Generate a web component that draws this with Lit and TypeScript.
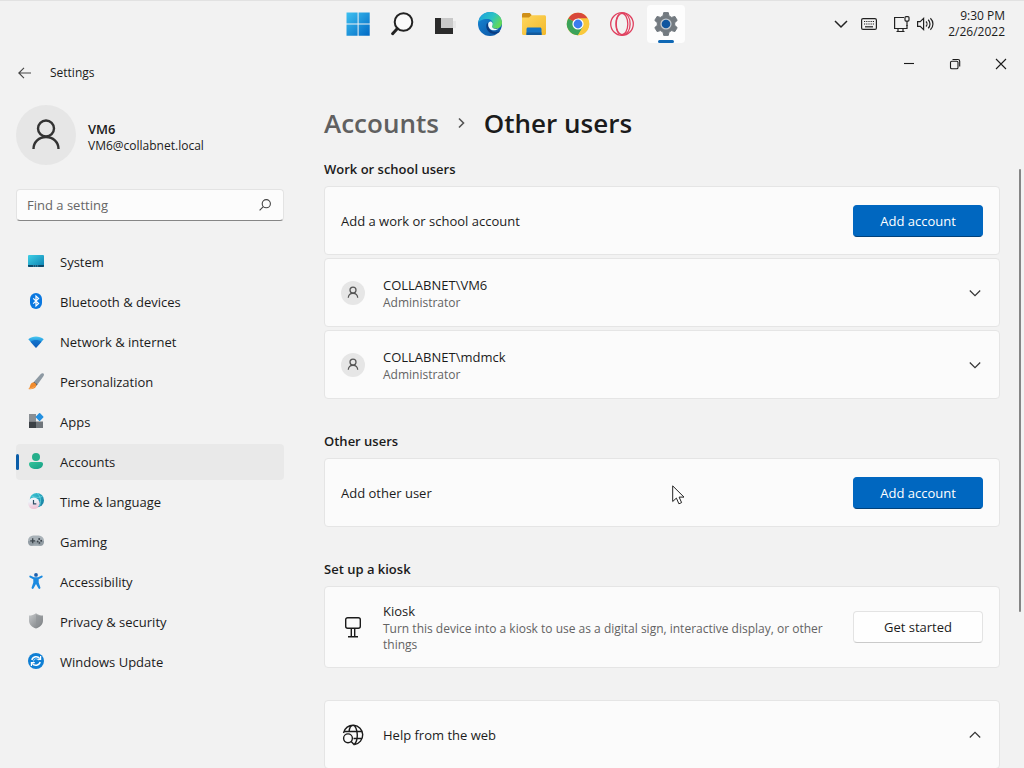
import { LitElement, html, css, svg } from "lit";
import { customElement, state } from "lit/decorators.js";
import { classMap } from "lit/directives/class-map.js";

const navIcons: Record<string, unknown> = {
  System: svg`<defs><linearGradient id="sy" x1="0" y1="0" x2="1" y2="1"><stop offset="0" stop-color="#3fd0e6"/><stop offset="1" stop-color="#0a7fb0"/></linearGradient></defs>
    <rect x="0" y="1" width="16" height="12" rx="1" fill="url(#sy)"/><path d="M0 11h16v1a1 1 0 0 1-1 1H1a1 1 0 0 1-1-1z" fill="#0b4a6b"/><path d="M5 12h6" stroke="#6fc3dd" stroke-width=".8" stroke-dasharray="1.2 .8"/>`,
  "Bluetooth & devices": svg`<rect x="2" y="-1" width="12" height="16" rx="6" fill="#0a78e0"/><path d="M5.200 4.400l5.400 5.200L8 12V2l2.600 2.400-5.400 5.200" fill="none" stroke="#fff" stroke-width="1.200"/>`,
  "Network & internet": svg`<defs><linearGradient id="ne" x1="0" y1="0" x2="0" y2="1"><stop offset="0" stop-color="#4cc9ef"/><stop offset=".5" stop-color="#1a8fe0"/><stop offset="1" stop-color="#0f4fa8"/></linearGradient></defs>
    <path d="M.3 5.200C4.600 1.600 11.400 1.600 15.700 5.200L8.600 13.300a.8.8 0 0 1-1.200 0z" fill="url(#ne)"/><path d="M2.600 7.900c3-2.600 7.800-2.600 10.800 0L8.600 13.300a.8.8 0 0 1-1.200 0z" fill="#0d63c0" opacity=".7"/>`,
  Personalization: svg`<path d="M15.400-.5c.9.700.7 1.800 0 2.700L9.700 10.200 6.200 7.400 12.800 0C13.700-.9 14.700-1 15.400-.5z" fill="#8d99a3"/><path d="M6.200 7.400l3.500 2.800-1.200 1.500-3.400-2.800z" fill="#55606a"/><path d="M5.100 8.600c2-.1 3.900 1.700 3 3.600C6.900 15 3.400 15.600.3 15c1.500-.8 1.300-1.700 1.800-3.200.5-1.600 1.400-3.100 3-3.200z" fill="#f08a2c"/><path d="M1.500 14.500c2 .2 3.800-.6 4.800-2.100" stroke="#fbb366" fill="none"/>`,
  Apps: svg`<path d="M1 0h7v7.500H1z" fill="#8a8f94"/><path d="M1 7.500h7V14H1z" fill="#3c4146"/><path d="M8 7.500h7V14H8z" fill="#70767b"/><rect x="8.600" y="0" width="6" height="6" rx=".8" transform="rotate(45 11.600 3)" fill="#2490e0"/>`,
  Accounts: svg`<defs><linearGradient id="ac" x1="0" y1="0" x2="1" y2="1"><stop offset="0" stop-color="#35c59a"/><stop offset="1" stop-color="#159c85"/></linearGradient></defs><circle cx="8" cy="3" r="4" fill="#25af8b"/><path d="M3 8h10c1.200 0 2 .8 2 1.900C15 13 12 15 8 15s-7-2-7-5.100C1 8.800 1.800 8 3 8z" fill="url(#ac)"/>`,
  "Time & language": svg`<defs><linearGradient id="tl" x1="0" y1="0" x2="1" y2="1"><stop offset="0" stop-color="#3fcbd8"/><stop offset="1" stop-color="#12779c"/></linearGradient><linearGradient id="tc" x1=".3" y1="0" x2=".5" y2="1"><stop offset=".3" stop-color="#eef3f8"/><stop offset="1" stop-color="#efbfd3"/></linearGradient></defs><circle cx="8.800" cy="6.200" r="7.200" fill="url(#tl)"/><path d="M9-.8c3.600 2.600 4.400 8 2.500 13M3.500 2c3.500 1.800 8 1.800 11 .3" fill="none" stroke="#6fdde4" stroke-width=".7"/><circle cx="5.800" cy="9.300" r="5.800" fill="url(#tc)"/><path d="M5.500 6V9.800h2.800" fill="none" stroke="#2d4f66" stroke-width="1.200"/>`,
  Gaming: svg`<rect x="0" y="1.500" width="16" height="10.500" rx="5.250" fill="#a9b2b8"/><path d="M0 7c0 6 4 5.500 6 3.500h4c2 2 6 2.500 6-3.500" fill="#939da4"/><path d="M4.700 4.300v5M2.200 6.800h5" stroke="#3c454c" stroke-width="1.300"/><circle cx="11.200" cy="5" r="1" fill="#3c454c"/><circle cx="13.200" cy="6.800" r="1" fill="#3c454c"/><circle cx="9.700" cy="7.500" r=".9" fill="#3c454c"/><circle cx="11.400" cy="8.900" r=".9" fill="#3c454c"/>`,
  Accessibility: svg`<circle cx="8" cy=".9" r="1.900" fill="#1a5fae"/><path d="M2.200 1.400c-1.100.1-1.200 1.500-.3 2l3.400 1.900v3.200l-1.700 5c-.3 1.500 1.500 2 2 .8L8 10l2.400 4.300c.5 1.200 2.300.7 2-.8l-1.700-5V5.300l3.400-1.900c.9-.5.800-1.900-.3-2L10 3.300H6z" fill="#1b8ae0"/>`,
  "Privacy & security": svg`<defs><linearGradient id="ps" x1="0" y1="0" x2="1" y2="1"><stop offset="0" stop-color="#c6c9cb"/><stop offset="1" stop-color="#75797c"/></linearGradient></defs><path d="M8-.8C10 .9 12.500 1.400 15 1.500v5c0 4-3 6.600-7 8-4-1.400-7-4-7-8v-5c2.500-.1 5-.6 7-2.300z" fill="url(#ps)"/><path d="M8 .6C9.800 1.800 11.800 2.400 13.700 2.500v4c0 3.200-2.300 5.300-5.700 6.600z" fill="#8f9396" opacity=".6"/>`,
  "Windows Update": svg`<circle cx="8" cy="7" r="8" fill="#0f7fd4"/><path d="M3.800 6A4.500 4.500 0 0 1 11.800 4.600M12.200 8A4.500 4.500 0 0 1 4.200 9.400" fill="none" stroke="#fff" stroke-width="1.400"/><path d="M12.600 2v3.400H9.200M3.400 12V8.600h3.400" fill="none" stroke="#fff" stroke-width="1.200"/><path d="M5.500 7.600a2.600 2.600 0 0 1 5-1.200" fill="none" stroke="#8fd0ff"/>`,
};

const person = svg`<circle cx="16" cy="9.500" r="8"/><path d="M3.500 30c0-7 5.500-12 12.500-12s12.500 5 12.500 12"/>`;

const taskbarApps = [
  { name: "Start", icon: svg`<defs><linearGradient id="st" gradientUnits="userSpaceOnUse" x1="0" y1="0" x2="24" y2="24"><stop offset="0" stop-color="#3fc3f2"/><stop offset="1" stop-color="#0068c4"/></linearGradient></defs><path d="M.5.500h11.100v11.100H.5zM12.600.500h11.100v11.100H12.600zM.5 12.600h11.100v11.100H.5zM12.600 12.600h11.100v11.100H12.600z" fill="url(#st)"/>` },
  { name: "Search", icon: svg`<circle cx="13.500" cy="10" r="8.800" fill="#fafafa" stroke="#222" stroke-width="2"/><path d="M7.200 16.700l-4.600 5" stroke="#222" stroke-width="3" stroke-linecap="round"/>` },
  { name: "Task View", icon: svg`<rect x="7" y="6" width="12" height="11" fill="#c9c9c9"/><path d="M1 6h6v10h12v6H1z" fill="#2b2b2b"/><path d="M19 9h3v7h-3z" fill="#e6e6e6"/>` },
  { name: "Edge", icon: svg`<defs><linearGradient id="e1" x1="0" y1="0" x2="1" y2=".5"><stop offset="0" stop-color="#1b9de2"/><stop offset=".6" stop-color="#2bc3c4"/><stop offset="1" stop-color="#62d85b"/></linearGradient><linearGradient id="e2" x1="0" y1="0" x2="1" y2="1"><stop offset="0" stop-color="#1689d8"/><stop offset="1" stop-color="#0b4f9e"/></linearGradient></defs><circle cx="12" cy="12" r="12" fill="url(#e2)"/><path d="M.2 11C1.400 3.800 6.300 0 12 0c7 0 12 5 12 10.600 0 4-2.800 6-5.800 6-2.700 0-4.400-1-4.400-2.100 0-.8 1-1.200 1-3C14.800 9 12.500 7 9 7 4.500 7 1 9 .2 11z" fill="url(#e1)"/><path d="M9.600 10.500c-3.500 4 .2 12 7.400 11.400 2-.2 4-1.200 5.200-2.900-6 2.500-11.500.5-12.600-8.500z" fill="#083c82"/><path d="M10.200 12c.2-2 2-3 3.500-2 1.700 1.200.900 3 .3 4.200-.5 1.200 2.200 3.500 6.700 2.400-4 3.600-11 1.400-10.500-4.600z" fill="#f3f8fb"/>` },
  { name: "File Explorer", icon: svg`<defs><linearGradient id="fe" x1="0" y1="0" x2="1" y2="1"><stop offset="0" stop-color="#ffd75e"/><stop offset="1" stop-color="#f2b92c"/></linearGradient></defs><path d="M0 2.500C0 1.600.6 1 1.500 1h6.300l2 2.200L7.500 7H0z" fill="#cf8f18"/><path d="M0 5.500h7l2.500-2.300h13c.9 0 1.500.6 1.500 1.500v16.800c0 .8-.6 1.500-1.500 1.500h-21C.6 23 0 22.300 0 21.500z" fill="url(#fe)"/><path d="M4.500 17c0-.9.6-1.500 1.500-1.500h12c.9 0 1.500.6 1.500 1.500V23h-15z" fill="#1473c4"/><path d="M4.500 20.500h15V23h-15z" fill="#125a9c"/>` },
  { name: "Chrome", icon: svg`<circle cx="12" cy="12" r="11.200" fill="#f9c93c"/><path d="M12 12L2.300 6.400a11.200 11.200 0 0 1 19.400 0H12z" fill="#d8483b"/><path d="M2.300 6.400A11.200 11.200 0 0 0 12 23.200l5-8.400-5-2.800z" fill="#3ba35a"/><path d="M12 6.400h9.700a11.200 11.200 0 0 1-9.700 16.800l5-8.400z" fill="#f9c93c"/><circle cx="12" cy="12" r="5.600" fill="#fff"/><circle cx="12" cy="12" r="4.400" fill="#3b7ded"/>` },
  { name: "Opera", icon: svg`<g fill="none" stroke="#e0405f" stroke-width="1.300"><circle cx="12" cy="12" r="11.300"/><ellipse cx="12" cy="12" rx="5.800" ry="10.600"/><path d="M12.500 1.200c5 .3 7.600 5 7.600 10.800s-2.600 10.500-7.600 10.800M9 2.500C5 6 5 18 9 21.500"/></g>` },
  { name: "Settings", icon: svg`<path d="M9.700.6h4.600l.7 3.300 2.600 1.500 3.300-1 2.300 4-2.500 2.300v2.600l2.500 2.300-2.300 4-3.300-1-2.600 1.500-.7 3.300H9.700L9 20.100l-2.600-1.500-3.300 1-2.300-4 2.500-2.300v-2.600L.8 8.400l2.300-4 3.300 1L9 3.900z" fill="#737a80" stroke="#737a80" stroke-linejoin="round"/><circle cx="12" cy="12" r="5.600" fill="#c3c9ce"/><circle cx="12" cy="12" r="4.300" fill="#0e559f"/>` },
];

const chevron = (up = false) => html`<svg class="chev" viewBox="0 0 12 12" aria-hidden="true"><path d=${up ? "M.8 8.500L6 3.300l5.200 5.200" : "M.8 3.500L6 8.700l5.200-5.200"} /></svg>`;

@customElement("app-root")
export class AppRoot extends LitElement {
  @state() private active = "Accounts";

  static styles = css`
    * { box-sizing: border-box; }
    :host {
      display: flex; flex-direction: column; height: 100vh; overflow: hidden;
      background: #f2f2f2; color: #1b1b1b;
      font: 13px/20px "Open Sans", "Noto Sans", sans-serif;
    }
    button, input { font: inherit; color: inherit; }
    button { border: 0; background: none; padding: 0; }
    h1, h2, p { margin: 0; font: inherit; }
    svg { display: block; overflow: visible; }
    .taskbar {
      flex: none; height: 48px; border-top: 1px solid #e2e2e2; padding-bottom: 1px;
      display: grid; grid-template-columns: 1fr auto 1fr; align-items: center;
    }
    .apps { grid-column: 2; display: flex; gap: 6px; }
    .app { width: 38px; height: 38px; display: grid; place-items: center; position: relative; border-radius: 4px; }
    .app svg { width: 24px; height: 24px; }
    .app.open { background: #fdfdfd; }
    .app.open::after { content: ""; position: absolute; bottom: 0; left: 11px; width: 16px; height: 3px; border-radius: 2px; background: #0f68b5; }
    .tray { justify-self: end; display: flex; align-items: center; padding-right: 19px; }
    .tray svg { fill: none; stroke: #222; stroke-width: 1.2; }
    .tray .more { width: 12px; height: 12px; margin-right: 14px; stroke-width: 1.5; }
    .tray .kbd { width: 16px; height: 12px; margin-right: 16px; }
    .tray .net { width: 17px; height: 16px; margin-right: 7px; }
    .tray .vol { width: 17px; height: 14px; margin-right: 14px; }
    .clock { text-align: right; font-size: 12px; line-height: 16px; }
    .titlebar { flex: none; display: flex; align-items: flex-start; justify-content: space-between; height: 50px; }
    .app-name { display: flex; align-items: center; gap: 18px; padding: 17px 0 0 16px; font-size: 12px; line-height: 16px; }
    .back { width: 16px; height: 16px; display: grid; place-items: center; }
    .back svg { width: 13px; height: 12px; fill: none; stroke: #444; stroke-width: 1.1; }
    .controls { display: flex; }
    .controls button { width: 46px; height: 32px; display: grid; place-items: center; }
    .controls svg { width: 10px; height: 10px; fill: none; stroke: #1b1b1b; stroke-width: 1.1; }
    .body { flex: 1; min-height: 0; display: grid; grid-template-columns: 268px minmax(0, 1fr) 5px; column-gap: 19px; padding-left: 16px; }
    .profile { display: flex; align-items: center; gap: 12px; padding-top: 7px; }
    .avatar { flex: none; border-radius: 50%; background: #e6e6e6; display: grid; place-items: center; }
    .avatar svg { fill: none; stroke: #333; }
    .avatar.large { width: 60px; height: 60px; }
    .avatar.large svg { width: 32px; height: 32px; stroke-width: 2.4; }
    .avatar.small { width: 24px; height: 24px; }
    .avatar.small svg { width: 12px; height: 13px; stroke-width: 3.4; stroke: #555; }
    .who { padding-top: 3px; }
    .name { font-weight: 600; line-height: 18px; }
    .mail { font-size: 12px; line-height: 16px; }
    .search {
      margin-top: 24px; height: 32px; display: flex; align-items: center; padding: 0 12px 0 10px;
      background: #fcfcfc; border: 1px solid #e3e3e3; border-bottom-color: #868686; border-radius: 4px;
    }
    .search input { flex: 1; min-width: 0; border: 0; outline: 0; padding: 0; background: none; }
    .search input::placeholder { color: #666; opacity: 1; }
    .search svg { width: 12px; height: 12px; fill: none; stroke: #444; stroke-width: 1.1; }
    nav { margin-top: 23px; display: flex; flex-direction: column; gap: 4px; }
    .item { height: 36px; display: flex; align-items: center; gap: 16px; padding-left: 12px; border-radius: 4px; color: inherit; text-decoration: none; position: relative; }
    .item svg { width: 16px; height: 16px; }
    .item.active { background: #e9e9e9; }
    .item.active::before { content: ""; position: absolute; left: 0; top: 10px; width: 3px; height: 16px; border-radius: 2px; background: #0a5da8; }
    main { padding: 5px 0 0 21px; }
    .crumbs { display: flex; align-items: center; gap: 18px; font-size: 26px; line-height: 40px; font-weight: 600; }
    .crumbs a { color: #606060; text-decoration: none; }
    .crumbs svg { width: 9px; height: 10px; fill: none; stroke: #555; stroke-width: 1.6; }
    .section { margin-bottom: 32px; }
    .section h2 { font-weight: 600; padding: 16px 0 7px; }
    .section + .section h2 { padding-top: 0; }
    .cards { display: flex; flex-direction: column; gap: 3px; }
    .card {
      min-height: 69px; display: flex; align-items: center; padding: 14px 16px; width: 100%; text-align: left;
      background: #fbfbfb; border: 1px solid #e5e5e5; border-radius: 4px;
    }
    .lead { width: 24px; margin-right: 18px; display: grid; place-items: center; flex: none; }
    .lead svg { width: 22px; height: 22px; fill: none; stroke: #1b1b1b; stroke-width: 1.4; }
    .text { flex: 1; min-width: 0; display: block; }
    .text span { display: block; }
    .text .sub { font-size: 12px; line-height: 16px; color: #636363; }
    .btn { flex: none; width: 130px; height: 32px; margin-left: 20px; border-radius: 4px; }
    .primary { background: #0067c0; color: #fff; border: 1px solid #0067c0; border-bottom-color: #00417a; }
    .standard { background: #fefefe; border: 1px solid #e3e3e3; border-bottom-color: #cacaca; }
    .chev { width: 12px; height: 12px; margin-right: 2px; fill: none; stroke: #333; stroke-width: 1.2; }
    .rail { padding: 71px 0 157px; }
    .thumb { display: block; width: 2px; height: 100%; border-radius: 1px; background: #858585; }
    .pointer { position: absolute; left: 672px; top: 485px; width: 13px; height: 20px; pointer-events: none; }
  `;

  private userCard(name: string) {
    return html`<button class="card">
      <span class="lead"><span class="avatar small"><svg viewBox="0 0 32 32" aria-hidden="true">${person}</svg></span></span>
      <span class="text"><span>${name}</span><span class="sub">Administrator</span></span>
      ${chevron()}
    </button>`;
  }

  render() {
    return html`
      <header class="taskbar">
        <div class="apps">
          ${taskbarApps.map((a) => html`<button class=${classMap({ app: true, open: a.name === "Settings" })} aria-label=${a.name}>
            <svg viewBox="0 0 24 24" aria-hidden="true">${a.icon}</svg>
          </button>`)}
        </div>
        <div class="tray">
          <svg class="more" viewBox="0 0 12 12"><path d="M0 3l6 6 6-6"/></svg>
          <svg class="kbd" viewBox="0 0 16 12"><rect x=".6" y=".6" width="14.800" height="10.800" rx="1.500"/><path d="M3 3.500h10M3 6h10" stroke-dasharray="1.200 1"/><path d="M4 8.800h8"/></svg>
          <svg class="net" viewBox="0 0 17 16"><path d="M11 1.500H1.600v11H14V9M5 12.500v3M10 12.500v3M3.500 15.500h8"/><rect x="12" y=".6" width="4" height="4.500" rx="1"/><path d="M14 5v5"/></svg>
          <svg class="vol" viewBox="0 0 17 14"><path d="M.6 4.600h2.600L6.600 1.400v11.200L3.200 9.400H.6zM9 4.500c1.300 1.300 1.300 3.700 0 5M11.200 2.800c2.400 2.300 2.400 6.100 0 8.400M13.400 1.200c3.400 3.200 3.400 8.400 0 11.600"/></svg>
          <div class="clock"><div>9:30 PM</div><div>2/26/2022</div></div>
        </div>
      </header>
      <div class="titlebar">
        <div class="app-name">
          <button class="back" aria-label="Back"><svg viewBox="0 0 13 12"><path d="M13 6H1M6 .8L.8 6 6 11.200"/></svg></button>
          <span>Settings</span>
        </div>
        <div class="controls">
          <button aria-label="Minimize"><svg viewBox="0 0 10 10"><path d="M0 4.500h10"/></svg></button>
          <button aria-label="Restore"><svg viewBox="0 0 10 10"><rect x=".5" y="2.200" width="7.500" height="7.500" rx="1.300"/><path d="M2.500.5H8A1.700 1.700 0 0 1 9.700 2.200V7.500"/></svg></button>
          <button aria-label="Close"><svg viewBox="0 0 10 10"><path d="M0 0l10 10M10 0L0 10"/></svg></button>
        </div>
      </div>
      <div class="body">
        <aside>
          <div class="profile">
            <div class="avatar large"><svg viewBox="0 0 32 32" aria-hidden="true">${person}</svg></div>
            <div class="who"><div class="name">VM6</div><div class="mail">VM6@collabnet.local</div></div>
          </div>
          <div class="search">
            <input type="text" placeholder="Find a setting" aria-label="Find a setting" />
            <svg viewBox="0 0 12 12" aria-hidden="true"><circle cx="7.300" cy="4.700" r="4.100"/><path d="M4.300 7.700L.6 11.400"/></svg>
          </div>
          <nav>
            ${Object.keys(navIcons).map((n) => html`<a href="#" class=${classMap({ item: true, active: n === this.active })}
              @click=${(e: Event) => { e.preventDefault(); this.active = n; }}>
              <svg viewBox="0 0 16 16" aria-hidden="true">${navIcons[n]}</svg><span>${n}</span></a>`)}
          </nav>
        </aside>
        <main>
          <h1 class="crumbs"><a href="#">Accounts</a><svg viewBox="0 0 9 10"><path d="M2 .5L6.500 5 2 9.500"/></svg><span>Other users</span></h1>
          <section class="section">
            <h2>Work or school users</h2>
            <div class="cards">
              <div class="card"><span class="text">Add a work or school account</span><button class="btn primary">Add account</button></div>
              ${this.userCard("COLLABNET\\VM6")}
              ${this.userCard("COLLABNET\\mdmck")}
            </div>
          </section>
          <section class="section">
            <h2>Other users</h2>
            <div class="card"><span class="text">Add other user</span><button class="btn primary">Add account</button></div>
          </section>
          <section class="section">
            <h2>Set up a kiosk</h2>
            <div class="card">
              <span class="lead"><svg viewBox="0 0 22 22" aria-hidden="true"><rect x="3.700" y="1.700" width="14.600" height="10.600" rx="2"/><path d="M9.300 12.300v8.200M12.700 12.300v8.200M6 20.700h10"/></svg></span>
              <span class="text"><span>Kiosk</span><span class="sub">Turn this device into a kiosk to use as a digital sign, interactive display, or other things</span></span>
              <button class="btn standard">Get started</button>
            </div>
          </section>
          <button class="card">
            <span class="lead"><svg viewBox="0 0 22 22" aria-hidden="true"><path d="M1.500 9A9.700 9.700 0 1 1 12.500 20.500M2 7.500h18M11.500 14.500h8.300M7 8c.4-4 2-6.700 4-6.700s4.300 4 4.300 9.700-1.500 8-3 9.500"/><circle cx="6" cy="14.300" r="4.400"/><path d="M9.200 17.500l3.300 3.500"/></svg></span>
            <span class="text">Help from the web</span>
            ${chevron(true)}
          </button>
        </main>
        <div class="rail"><span class="thumb"></span></div>
      </div>
      <svg class="pointer" viewBox="0 0 13 20" aria-hidden="true"><path d="M.7.900v15.600l3.700-3.400 2.500 5.700 2.700-1.200-2.500-5.500h4.900z" fill="#fff" stroke="#222"/></svg>
    `;
  }
}
